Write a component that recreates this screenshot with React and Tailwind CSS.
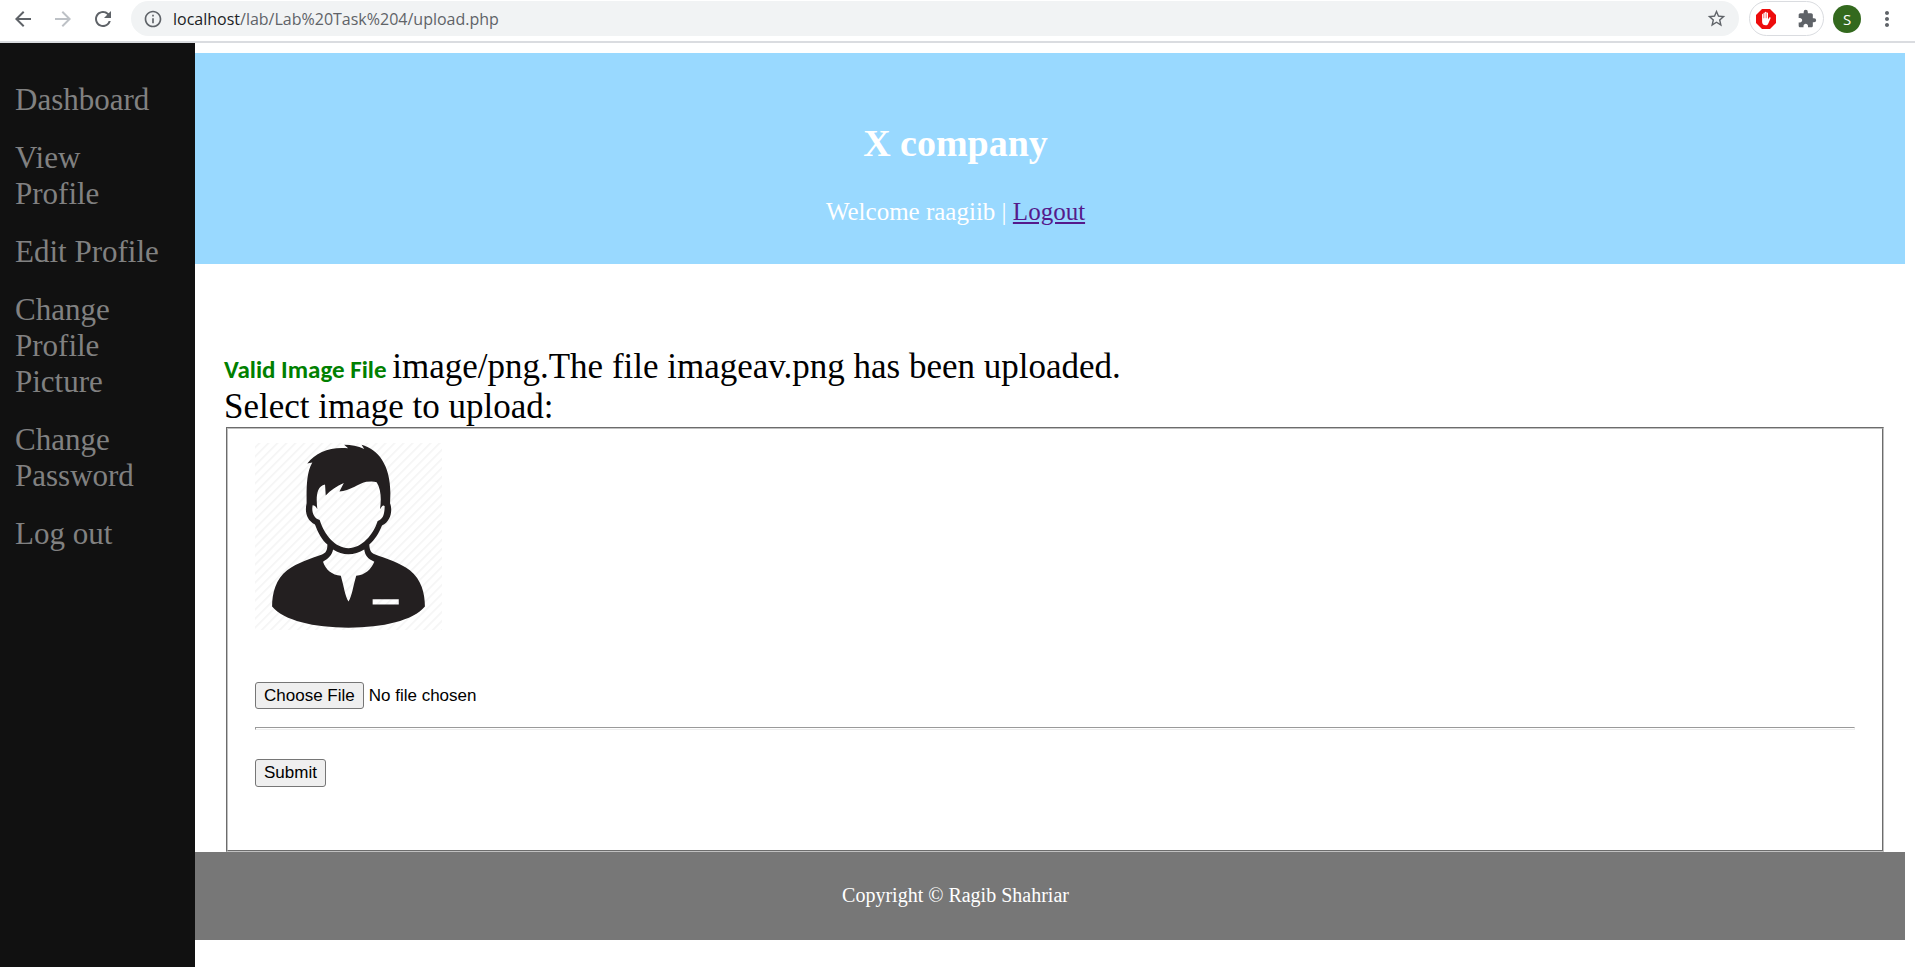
import { MdArrowBack, MdArrowForward, MdRefresh, MdInfoOutline, MdStarBorder, MdExtension, MdMoreVert } from "react-icons/md";

const links = [
  "Dashboard",
  "View Profile",
  "Edit Profile",
  "Change Profile Picture",
  "Change Password",
  "Log out",
];

function BlockerIcon() {
  return (
    <svg viewBox="0 0 20 20" className="size-5" aria-hidden="true">
      <path d="M6 0h8l6 6v8l-6 6H6l-6-6V6z" fill="#ed0c0c" />
      <path
        d="M6.1 10.2V5.6c0-1 1.3-1 1.4 0V4.2c0-1 1.5-1 1.5 0v-.7c0-1 1.5-1 1.5 0v.8c0-1 1.5-1 1.5 0v6.2l1.1-1.7c.6-.9 1.8-.3 1.4.6l-2.2 5c-.5 1.2-1.3 1.9-2.7 1.9-2.1 0-3.5-1.3-3.5-3.3z"
        fill="#fff"
      />
      <path d="M7.5 5v4.3M9 4.2v5M10.5 4.2v5" stroke="#ed0c0c" strokeWidth=".4" />
    </svg>
  );
}

function BrowserBar() {
  return (
    <div className="flex h-[43px] shrink-0 items-start border-b-2 border-[#dadce0] bg-white pr-4 font-['Open_Sans',sans-serif]">
      <div className="flex h-[38px] items-center gap-4 pl-[11px] text-[#5f6368]">
        <button aria-label="Back"><MdArrowBack className="size-6" /></button>
        <button aria-label="Forward" className="text-[#bdc1c6]"><MdArrowForward className="size-6" /></button>
        <button aria-label="Reload"><MdRefresh className="size-6" /></button>
      </div>
      <div className="ml-4 mt-px flex h-[35px] flex-1 items-center rounded-full bg-[#f1f3f4] pl-3 pr-3 text-[#5f6368]">
        <MdInfoOutline className="size-5" />
        <div className="ml-[10px] flex-1 text-[16px]" role="textbox" aria-label="Address">
          <span className="text-[#202124]">localhost</span>/lab/Lab%20Task%204/upload.php
        </div>
        <button aria-label="Bookmark"><MdStarBorder className="size-[21px]" /></button>
      </div>
      <div className="ml-[10px] mt-px flex h-[35px] w-[75px] items-center justify-between rounded-full border border-[#dadce0] px-[6px]">
        <button aria-label="Ad blocker"><BlockerIcon /></button>
        <button aria-label="Extensions" className="text-[#5f6368]"><MdExtension className="size-5" /></button>
      </div>
      <button className="ml-[9px] mt-[5px] size-7 rounded-full bg-[#33691e] text-[15px] text-white" aria-label="Account S">S</button>
      <button aria-label="Menu" className="ml-[14px] mt-[7px] text-[#5f6368]"><MdMoreVert className="size-6" /></button>
    </div>
  );
}

function Portrait() {
  return (
    <svg viewBox="108 70 558 558" className="block size-[187px]" role="img" aria-label="Profile picture">
      <defs>
        <pattern id="stripes" width="19" height="19" patternUnits="userSpaceOnUse" patternTransform="rotate(45)">
          <rect width="5" height="19" fill="#f5f5f5" />
        </pattern>
      </defs>
      <rect x="108" y="70" width="558" height="558" fill="url(#stripes)" />
      <path
        fill="#231f20"
        fillRule="evenodd"
        d="M264 131C290 98 335 80 386 86L374 75C395 75 415 78 434 88L426 75C475 88 512 135 512 220L511 250C519 270 514 305 487 316C478 338 465 360 449 373C450 392 455 398 465 402C500 415 540 427 570 450C605 478 615 520 615 558C580 600 490 621 387 621C284 621 194 600 159 558C159 520 170 475 204 450C235 427 275 415 308 403C320 398 324 390 324 373C308 360 295 335 287 313C262 300 256 275 262 250C262 210 260 160 279 128Z
        M294 268C291 240 288 200 317 194L319 227C333 210 352 199 373 189L360 215C390 214 420 190 440 186Q460 183 471 187C485 208 485 240 481 268C487 257 491 254 495 259C494 285 490 297 474 303C461 345 425 384 387 384C348 384 315 345 301 300C283 295 276 275 280 256C286 256 290 260 294 268Z
        M341 388C338 405 325 417 311 424C318 447 338 464 364 466C374 500 376 525 387 543C398 525 400 500 410 466C435 464 455 447 464 424C445 417 436 405 434 388C405 407 368 407 341 388Z
        M459 536H537V552H459Z"
      />
    </svg>
  );
}

export default function App() {
  return (
    <div className="flex min-h-screen flex-col bg-white font-['Liberation_Serif',serif] text-black">
      <BrowserBar />
      <div className="flex flex-1">
        <nav className="flex w-[195px] shrink-0 flex-col gap-[22px] bg-[#111] pl-[15px] pr-[30px] pt-[39px] text-[31px] leading-[36px] text-[#818181]">
          {links.map((label) => (
            <a key={label} href="#">{label}</a>
          ))}
        </nav>
        <div className="mr-[10px] mt-[10px] min-w-0 flex-1">
          <header className="flex h-[211px] flex-col items-center bg-[#99d9ff] pr-[189px] pt-[68px] text-white">
            <h1 className="text-[38px] font-bold leading-[44px]">X company</h1>
            <p className="mt-8 text-[25px] leading-[30px]">
              Welcome raagiib | <a href="#" className="text-[#551a8b] underline">Logout</a>
            </p>
          </header>
          <main className="pl-[29px] pr-[19px] pt-[83px]">
            <p className="text-[35px] leading-[40px]">
              <span className="font-['Carlito','Lato',sans-serif] text-[25px] font-bold leading-none text-[#008000]">Valid Image File </span>
              image/png.The file imageav.png has been uploaded.
            </p>
            <label htmlFor="picture" className="block text-[35px] leading-[40px]">Select image to upload:</label>
            <form onSubmit={(event) => event.preventDefault()}>
              <fieldset className="mx-0.5 border-2 border-[#c0c0c0] px-[27px] pb-[63px] pt-[14px] font-['Liberation_Sans',sans-serif] text-[17px] [border-style:groove]">
                <Portrait />
                <input
                  id="picture"
                  type="file"
                  className="mt-[52px] block h-[27px] leading-[25px] file:mr-[5px] file:h-[27px] file:rounded-[3px] file:border file:border-solid file:border-[#767676] file:bg-[#efefef] file:px-2 file:text-black"
                />
                <hr className="mt-[18px] h-[3px] border-x border-y border-b-[#eeeeee] border-l-[#9a9a9a] border-r-[#eeeeee] border-t-[#9a9a9a]" />
                <button type="submit" className="mt-[29px] block h-7 rounded-[3px] border border-[#767676] bg-[#efefef] px-2 leading-[26px]">
                  Submit
                </button>
              </fieldset>
            </form>
          </main>
          <footer className="bg-[#777] pb-[33px] pr-[189px] pt-[31px] text-center text-[20px] leading-6 text-white">
            Copyright © Ragib Shahriar
          </footer>
        </div>
      </div>
    </div>
  );
}
